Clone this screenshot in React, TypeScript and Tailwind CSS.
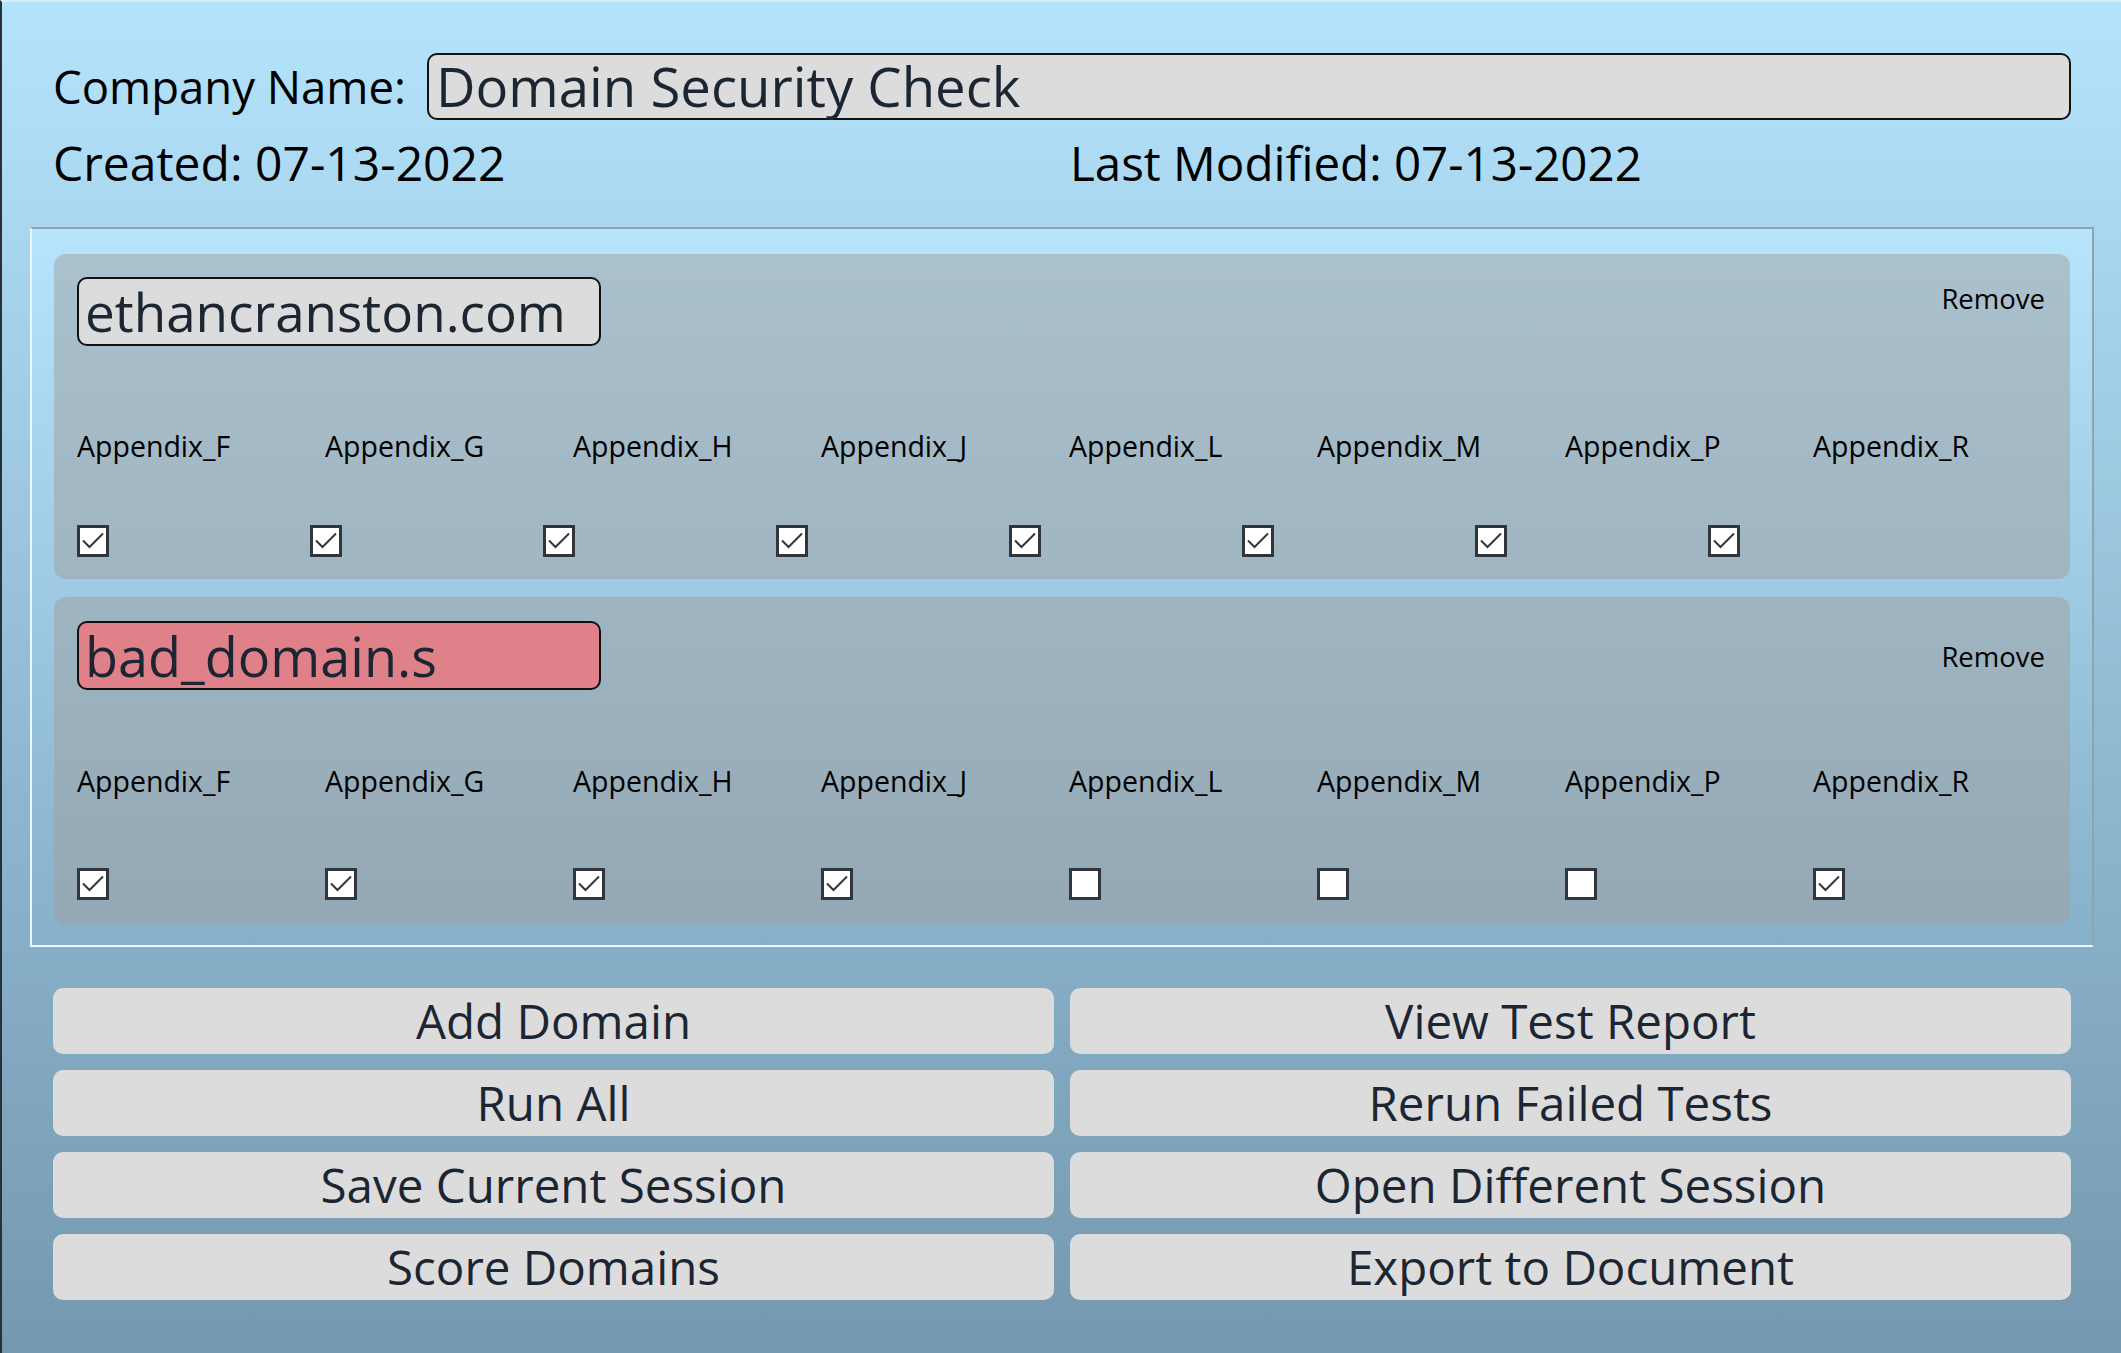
import React from "react";

const labels = [
  "Appendix_F",
  "Appendix_G",
  "Appendix_H",
  "Appendix_J",
  "Appendix_L",
  "Appendix_M",
  "Appendix_P",
  "Appendix_R",
];

function Check({ checked }: { checked: boolean }) {
  return (
    <div className="w-[32px] h-[32px] bg-white border-[3px] border-[#30363c] relative">
      {checked && (
        <svg width="32" height="32" viewBox="0 0 32 32" className="absolute left-[-3px] top-[-3px]">
          <polyline points="6,15.5 12.5,22 26,8.5" fill="none" stroke="#30363c" strokeWidth="2" />
        </svg>
      )}
    </div>
  );
}

function DomainCard({
  name,
  bad,
  checks,
  narrow,
  pt,
  removeMt,
  labelsMt,
  checksMt,
  pb,
}: {
  name: string;
  bad?: boolean;
  checks: boolean[];
  narrow?: boolean;
  pt: string;
  removeMt: string;
  labelsMt: string;
  checksMt: string;
  pb: string;
}) {
  return (
    <div className={`rounded-[12px] bg-[#a0a0a0]/50 pl-[23px] pr-[25px] ${pt} ${pb}`}>
      <div className="flex justify-between items-start">
        <div
          className={`w-[524px] h-[69px] rounded-[10px] border-2 border-[#111] flex items-center pl-[6px] text-[#1c2633] leading-none ${
            bad ? "bg-[#e0818a] text-[54px]" : "bg-[#dcdcdc] text-[53px]"
          }`}
        >
          {name}
        </div>
        <div className={`text-[27.5px] text-black leading-[40px] ${removeMt}`}>Remove</div>
      </div>
      <div className={`grid grid-cols-[repeat(8,248px)] h-[40px] items-center ${labelsMt}`}>
        {labels.map((l) => (
          <div key={l} className="text-[28.5px] text-black leading-[40px]">
            {l}
          </div>
        ))}
      </div>
      <div
        className={`grid h-[32px] ${checksMt} ${
          narrow ? "grid-cols-[repeat(8,233px)]" : "grid-cols-[repeat(8,248px)]"
        }`}
      >
        {checks.map((c, i) => (
          <Check key={i} checked={c} />
        ))}
      </div>
    </div>
  );
}

const buttons = [
  "Add Domain",
  "View Test Report",
  "Run All",
  "Rerun Failed Tests",
  "Save Current Session",
  "Open Different Session",
  "Score Domains",
  "Export to Document",
];

export default function App() {
  return (
    <div
      className="w-[2121px] h-[1353px] overflow-hidden border-l-2 border-l-[#2a3038] border-t-2 border-t-[#d6eef9] bg-gradient-to-b from-[#b4e4fc] to-[#7498b0]"
      style={{ fontFamily: '"Open Sans", "Noto Sans", sans-serif' }}
    >
      <div className="pt-[51px] pl-[51px] pr-[50px]">
        <div className="flex items-center h-[67px]">
          <div className="w-[374px] text-[45.5px] text-black leading-none">Company Name:</div>
          <div className="flex-1 h-[67px] rounded-[10px] border-2 border-[#111] bg-[#dcdcdc] flex items-center pl-[7px] text-[54.5px] text-[#1c2633] leading-none">
            Domain Security Check
          </div>
        </div>
        <div className="flex items-center h-[86px]">
          <div className="w-[1017px] text-[48px] text-black leading-none">Created: 07-13-2022</div>
          <div className="text-[47.5px] text-black leading-none">Last Modified: 07-13-2022</div>
        </div>
      </div>
      <div className="ml-[28px] mt-[21px] w-[2064px] h-[720px] border-2 border-t-[#8ea3b2] border-r-[#8ea3b2] border-l-[#eef6fa] border-b-[#eef6fa] bg-gradient-to-b from-[#b6e5fd] to-[#87b0c9] pt-[25px] pl-[22px] pr-[22px] flex flex-col gap-[18px]">
        <DomainCard
          name="ethancranston.com"
          checks={[true, true, true, true, true, true, true, true]}
          narrow
          pt="pt-[23px]"
          removeMt="mt-[2px]"
          labelsMt="mt-[80px]"
          checksMt="mt-[59px]"
          pb="pb-[22px]"
        />
        <DomainCard
          name="bad_domain.s"
          bad
          checks={[true, true, true, true, false, false, false, true]}
          pt="pt-[24px]"
          removeMt="mt-[16px]"
          labelsMt="mt-[71px]"
          checksMt="mt-[67px]"
          pb="pb-[25px]"
        />
      </div>
      <div className="ml-[51px] mr-[50px] mt-[41px] grid grid-cols-2 gap-x-[16px] gap-y-[16px]">
        {buttons.map((b) => (
          <div
            key={b}
            className="h-[66px] rounded-[10px] bg-[#dcdcdc] flex items-center justify-center text-[47.5px] text-[#1c2633] leading-none"
          >
            {b}
          </div>
        ))}
      </div>
    </div>
  );
}
